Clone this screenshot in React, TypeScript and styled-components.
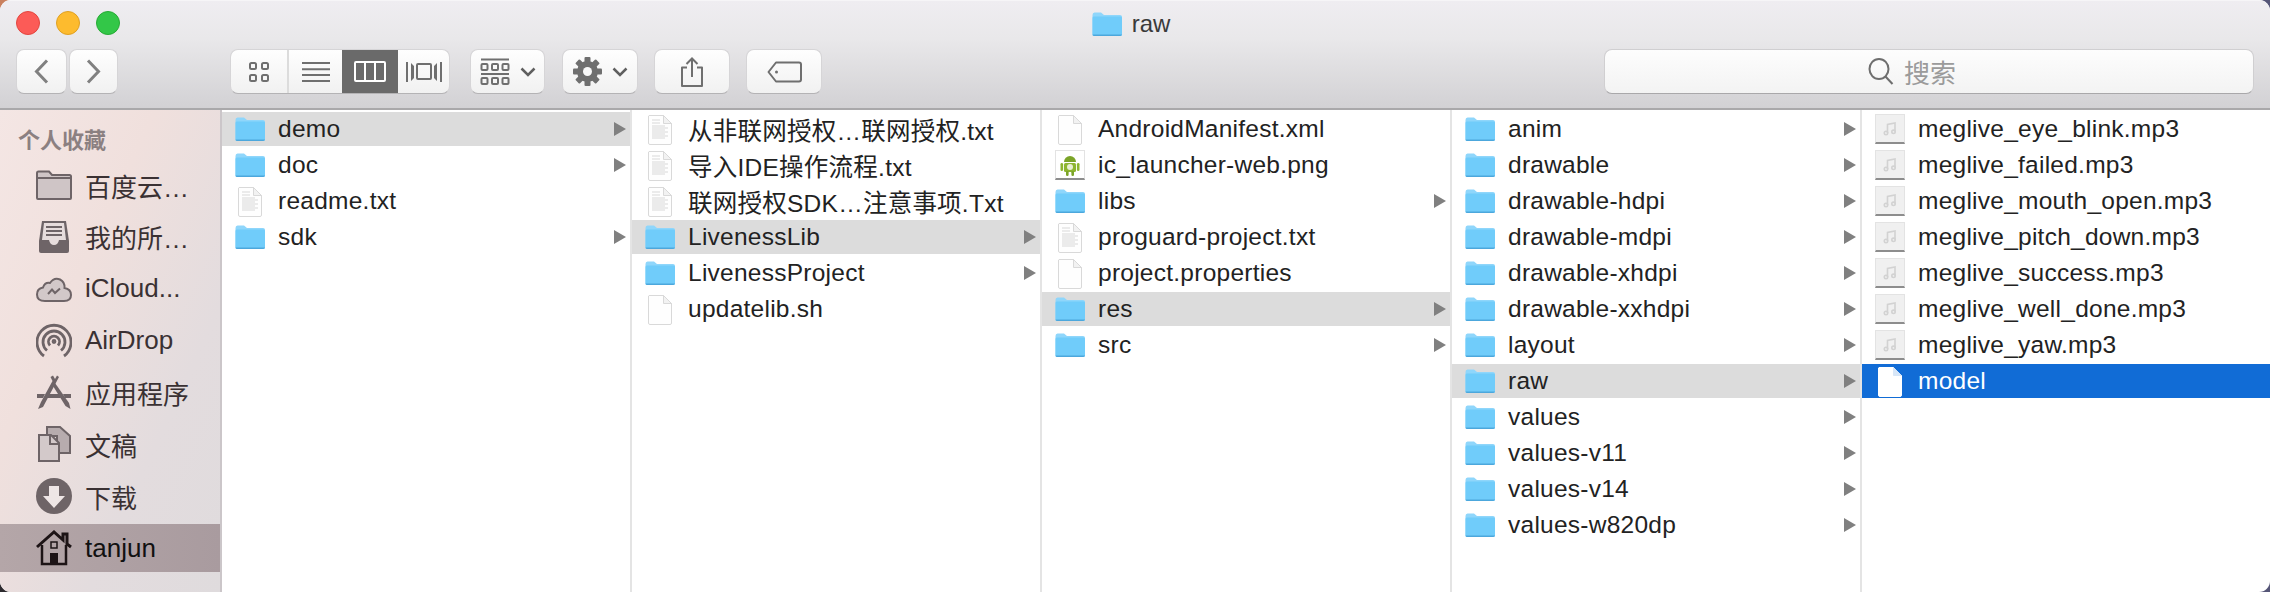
import React from 'react';
import styled, { createGlobalStyle } from 'styled-components';

const GlobalStyle = createGlobalStyle`
  html, body {
    margin: 0;
    padding: 0;
    background:
      radial-gradient(circle at 0 0, #c9805e 0, #c9805e 8px, transparent 12px),
      linear-gradient(90deg, #2c2a2e 0%, #555577 100%);
  }
  * { box-sizing: border-box; }
`;

const Window = styled.div`
  width: 2270px;
  height: 592px;
  border-radius: 11px;
  overflow: hidden;
  background: #fff;
  display: flex;
  flex-direction: column;
  font-family: 'Liberation Sans', 'Noto Sans CJK SC', sans-serif;
`;

const Header = styled.header`
  height: 110px;
  flex: none;
  background: linear-gradient(#efedf1 0%, #e9e8ea 35%, #d2d1d4 100%);
  border-top: 1px solid #f6f5f7;
  border-bottom: 2px solid #a9a8aa;
`;

const TitleRow = styled.div`
  height: 48px;
  display: grid;
  grid-template-columns: 1fr auto 1fr;
  align-items: center;
`;

const Lights = styled.div`
  display: flex;
  gap: 16px;
  padding-left: 16px;
  margin-top: -4px;
`;

const Light = styled.span<{ $fill: string; $edge: string }>`
  width: 24px;
  height: 24px;
  border-radius: 50%;
  background: ${(p) => p.$fill};
  border: 1px solid ${(p) => p.$edge};
`;

const Title = styled.div`
  display: flex;
  align-items: center;
  gap: 10px;
  margin: -3px 8px 0 0;
  font-size: 24px;
  color: #3a3a3a;
`;

const Toolbar = styled.div`
  display: flex;
  align-items: flex-start;
  padding: 0 16px;
`;

const ToolButton = styled.div<{ $width: number; $gapLeft?: number }>`
  width: ${(p) => p.$width}px;
  height: 45px;
  margin-left: ${(p) => p.$gapLeft ?? 0}px;
  flex: none;
  display: flex;
  align-items: center;
  justify-content: center;
  gap: 10px;
  border-radius: 8px;
  background: linear-gradient(#fefefe, #f1f1f1);
  border: 1px solid #d6d5d7;
  border-bottom-color: #b4b3b5;
`;

const ViewGroup = styled.div`
  width: 220px;
  height: 45px;
  margin-left: 112px;
  flex: none;
  display: flex;
  border-radius: 8px;
  overflow: hidden;
  background: linear-gradient(#fefefe, #f1f1f1);
  border: 1px solid #d6d5d7;
  border-bottom-color: #b4b3b5;
`;

const ViewCell = styled.div<{ $width: number; $active?: boolean; $rule?: boolean }>`
  width: ${(p) => p.$width}px;
  flex: none;
  display: flex;
  align-items: center;
  justify-content: center;
  background: ${(p) => (p.$active ? '#6a6a6a' : 'transparent')};
  border-right: ${(p) => (p.$rule ? '2px solid #dcdcdc' : 'none')};
`;

const SearchBox = styled.div`
  width: 650px;
  height: 45px;
  margin-left: auto;
  padding-right: 34px;
  display: flex;
  align-items: center;
  justify-content: center;
  gap: 9px;
  border-radius: 8px;
  background: linear-gradient(#fdfdfd, #f3f3f3);
  border: 1px solid #d0cfd1;
  border-bottom-color: #a9a8aa;
  font-size: 26px;
  color: #9b9b9b;
`;

const Body = styled.div`
  flex: 1;
  display: flex;
  min-height: 0;
`;

const Sidebar = styled.nav`
  width: 222px;
  flex: none;
  border-right: 2px solid #cbc6c9;
  background: linear-gradient(115deg, #f4e6e4 0%, #f0e0dd 35%, #e3dcde 70%, #dfdbdd 100%);
`;

const SideHeading = styled.div`
  height: 51px;
  padding: 4px 0 0 18px;
  display: flex;
  align-items: center;
  font-size: 22px;
  font-weight: 700;
  color: #8b8081;
`;

const SideList = styled.div`
  display: flex;
  flex-direction: column;
  gap: 3.86px;
`;

const SideItem = styled.div<{ $current?: boolean }>`
  height: 48px;
  padding-left: 36px;
  display: flex;
  align-items: center;
  gap: 13px;
  font-size: 26px;
  color: ${(p) => (p.$current ? '#111' : '#3a3133')};
  background: ${(p) => (p.$current ? 'linear-gradient(90deg, #b4a6a8, #a99b9f)' : 'transparent')};
`;

const SideIconBox = styled.span`
  width: 36px;
  height: 36px;
  flex: none;
  display: flex;
`;

const Column = styled.section`
  width: 410px;
  flex: none;
  padding-top: 2px;
  border-right: 2px solid #e4e4e4;
  &:last-child {
    width: 408px;
    border-right: none;
  }
`;

const Row = styled.div<{ $tone?: 'trail' | 'focus' }>`
  height: 34px;
  margin-bottom: 2px;
  display: flex;
  align-items: center;
  font-size: 24.5px;
  letter-spacing: 0.25px;
  color: ${(p) => (p.$tone === 'focus' ? '#fff' : '#222')};
  background: ${(p) =>
    p.$tone === 'focus' ? '#116cd6' : p.$tone === 'trail' ? '#dcdcdc' : 'transparent'};
`;

const RowIcon = styled.span`
  width: 56px;
  height: 34px;
  flex: none;
  display: flex;
  align-items: center;
  justify-content: center;
`;

const RowName = styled.span`
  flex: 1;
  white-space: nowrap;
`;

const Chevron = styled.span`
  width: 0;
  height: 0;
  margin-right: 4px;
  border-left: 12px solid #808080;
  border-top: 7px solid transparent;
  border-bottom: 7px solid transparent;
`;

const FolderIcon = ({ size = 30 }: { size?: number }) => (
  <svg width={size} height={size * 0.8} viewBox="0 0 30 24" style={{ flex: 'none' }}>
    <path d="M0.5 3 Q0.5 0.5 2.5 0.5 H9 L12 3 H28 Q30 3 30 5 V22 Q30 24 28 24 H2 Q0.5 24 0.5 22 Z" fill="#8fd6fb" />
    <path d="M0.5 6 Q0.5 4.6 2 4.6 H28.5 Q30 4.6 30 6 V22 Q30 24 28 24 H2 Q0.5 24 0.5 22 Z" fill="#70ccfa" />
    <path d="M0.5 22.4 H30 V22.6 Q30 24 28 24 H2 Q0.5 24 0.5 22.6 Z" fill="#4ca7dc" />
  </svg>
);

const PageIcon = ({ lines, solid }: { lines?: boolean; solid?: boolean }) => (
  <svg width="24" height="31" viewBox="0 0 24 31">
    <path
      d="M1 1.5 H15.5 L23.5 9.5 V29 Q23.5 30.5 22 30.5 H2 Q0.5 30.5 0.5 29 V2 Z"
      fill={solid ? '#fff' : '#fefefe'}
      stroke={solid ? '#fff' : '#d9d9d9'}
    />
    <path d="M15.5 1.5 V9.5 H23.5 Z" fill={solid ? '#d7e6f7' : '#f2f2f2'} stroke={solid ? '#d7e6f7' : '#d9d9d9'} />
    {lines &&
      [6, 9, 12, 14, 16, 18, 20, 22, 24].map((y) => (
        <line key={y} x1="4" x2={y < 10 ? 12 : y % 4 === 0 ? 17 : 20} y1={y} y2={y} stroke="#cfcfcf" strokeWidth="0.8" />
      ))}
  </svg>
);

const ThumbFrame = styled.span<{ $white?: boolean }>`
  width: 30px;
  height: 30px;
  flex: none;
  display: flex;
  align-items: center;
  justify-content: center;
  background: ${(p) => (p.$white ? '#fff' : '#f0f0f0')};
  border: 1px solid #e3e3e3;
  border-bottom: 2px solid #8d8d8d;
`;

const AndroidIcon = () => (
  <ThumbFrame $white>
    <svg width="20" height="22" viewBox="0 0 20 22">
      <path d="M4 8 A6 6 0 0 1 16 8 Z" fill="#7ba428" />
      <rect x="4" y="9" width="12" height="9" rx="1.5" fill="#8db52f" />
      <rect x="0.5" y="9" width="2.6" height="8" rx="1.3" fill="#8db52f" />
      <rect x="16.9" y="9" width="2.6" height="8" rx="1.3" fill="#8db52f" />
      <rect x="6" y="17" width="2.6" height="5" rx="1.2" fill="#7ba428" />
      <rect x="11.4" y="17" width="2.6" height="5" rx="1.2" fill="#7ba428" />
      <circle cx="10" cy="13" r="3" fill="#e8efd4" />
    </svg>
  </ThumbFrame>
);

const AudioIcon = () => (
  <ThumbFrame>
    <svg width="14" height="14" viewBox="0 0 14 14" fill="none" stroke="#d2d2d2" strokeWidth="1.6">
      <path d="M4.5 11 V2.5 L12 1 V9.5" />
      <circle cx="3" cy="11" r="1.7" />
      <circle cx="10.5" cy="9.8" r="1.7" />
    </svg>
  </ThumbFrame>
);

const sideStroke = '#6e6467';

const sideIcons: Record<string, React.ReactNode> = {
  folder: (
    <path d="M1 9 V6 Q1 4.500 2.500 4.500 H13 L16 8 H33.500 Q35 8 35 9.500 V31 Q35 32 34 32 H2 Q1 32 1 31 Z M1 11 H35" fill="#cfc5c6" stroke={sideStroke} strokeWidth="2" />
  ),
  tray: (
    <>
      <path d="M6 2 H30 L33 22 V32 Q33 34 31 34 H5 Q3 34 3 32 V22 Z" fill={sideStroke} />
      <path d="M8 4 H28 L30 21 H23 Q22 26 18 26 Q14 26 13 21 H6 Z" fill="#e6dcdc" />
      <path d="M10 8 H26 M10 12 H26 M10 16 H26" stroke={sideStroke} strokeWidth="2" />
    </>
  ),
  cloud: (
    <>
      <path d="M9 30 Q1 30 1 23.500 Q1 17.500 7 16.500 Q9 11 14 12 Q18 6 24 8.500 Q29 11 28.500 17 Q35 18 35 24 Q35 30 28 30 Z" fill="#d2c8c9" stroke={sideStroke} strokeWidth="2" />
      <path d="M12 23 L16 18.500 L19 22 L24 17.500" fill="none" stroke={sideStroke} strokeWidth="2" />
    </>
  ),
  airdrop: (
    <g fill="none" stroke={sideStroke} strokeWidth="2.800">
      <path d="M8 33 A17 17 0 1 1 28 33" />
      <path d="M11 27.500 A11 11 0 1 1 25 27.500" />
      <path d="M14 22.500 A5.500 5.500 0 1 1 22 22.500" />
      <circle cx="18" cy="18.500" r="1" fill={sideStroke} />
    </g>
  ),
  apps: (
    <g fill={sideStroke}>
      <path d="M1 20 H9 L7 24 H1 Z M27 20 H35 V24 H29 Z M13 20 H23 L25 24 H11 Z" />
      <path d="M5 28 L16.500 7 L14.500 3 L17 1.500 L19 5 L21 1.500 L23 3 L7 33 L2 35 Z" />
      <path d="M19 9 L33 29 L34.500 35 L29.500 32 L17 12 Z" />
    </g>
  ),
  docs: (
    <>
      <path d="M11 1 H24 L34 10 V27 H21 V10 H11 Z" fill="#b7acae" stroke={sideStroke} strokeWidth="2" />
      <path d="M3 9 H15 L23 17 V35 H3 Z" fill="#d3c9ca" stroke={sideStroke} strokeWidth="2" />
      <path d="M14 9 V18 H23" fill="none" stroke={sideStroke} strokeWidth="2" />
    </>
  ),
  download: (
    <>
      <circle cx="18" cy="18" r="18" fill={sideStroke} />
      <path d="M13 8 H23 V18 H29 L18 30 L7 18 H13 Z" fill="#eee6e6" />
    </>
  ),
  home: (
    <>
      <path d="M1 17 L18 2 L27 10 V4 H31 V14 L35 17" fill="none" stroke="#1d1416" strokeWidth="3" />
      <path d="M6 15 V34 H30 V15" fill="none" stroke="#1d1416" strokeWidth="2.500" />
      <rect x="15" y="12" width="6" height="6" fill="none" stroke="#1d1416" strokeWidth="1.500" />
      <rect x="14" y="23" width="8" height="11" fill="#1d1416" />
    </>
  ),
};

const SideIcon = ({ name }: { name: string }) => (
  <SideIconBox>
    <svg width="36" height="36" viewBox="0 0 36 36">
      {sideIcons[name]}
    </svg>
  </SideIconBox>
);

const places = [
  { icon: 'folder', label: '百度云…' },
  { icon: 'tray', label: '我的所…' },
  { icon: 'cloud', label: 'iCloud...' },
  { icon: 'airdrop', label: 'AirDrop' },
  { icon: 'apps', label: '应用程序' },
  { icon: 'docs', label: '文稿' },
  { icon: 'download', label: '下载' },
  { icon: 'home', label: 'tanjun', current: true },
];

type Kind = 'folder' | 'doc' | 'blank' | 'png' | 'audio';
type Entry = { name: string; kind: Kind; tone?: 'trail' | 'focus' };

const folders = (names: string[]): Entry[] => names.map((name) => ({ name, kind: 'folder' as Kind }));

const columns: Entry[][] = [
  [
    { name: 'demo', kind: 'folder', tone: 'trail' },
    { name: 'doc', kind: 'folder' },
    { name: 'readme.txt', kind: 'doc' },
    { name: 'sdk', kind: 'folder' },
  ],
  [
    { name: '从非联网授权…联网授权.txt', kind: 'doc' },
    { name: '导入IDE操作流程.txt', kind: 'doc' },
    { name: '联网授权SDK…注意事项.Txt', kind: 'doc' },
    { name: 'LivenessLib', kind: 'folder', tone: 'trail' },
    { name: 'LivenessProject', kind: 'folder' },
    { name: 'updatelib.sh', kind: 'blank' },
  ],
  [
    { name: 'AndroidManifest.xml', kind: 'blank' },
    { name: 'ic_launcher-web.png', kind: 'png' },
    { name: 'libs', kind: 'folder' },
    { name: 'proguard-project.txt', kind: 'doc' },
    { name: 'project.properties', kind: 'blank' },
    { name: 'res', kind: 'folder', tone: 'trail' },
    { name: 'src', kind: 'folder' },
  ],
  [
    ...folders(['anim', 'drawable', 'drawable-hdpi', 'drawable-mdpi', 'drawable-xhdpi', 'drawable-xxhdpi', 'layout']),
    { name: 'raw', kind: 'folder', tone: 'trail' },
    ...folders(['values', 'values-v11', 'values-v14', 'values-w820dp']),
  ],
  [
    { name: 'meglive_eye_blink.mp3', kind: 'audio' },
    { name: 'meglive_failed.mp3', kind: 'audio' },
    { name: 'meglive_mouth_open.mp3', kind: 'audio' },
    { name: 'meglive_pitch_down.mp3', kind: 'audio' },
    { name: 'meglive_success.mp3', kind: 'audio' },
    { name: 'meglive_well_done.mp3', kind: 'audio' },
    { name: 'meglive_yaw.mp3', kind: 'audio' },
    { name: 'model', kind: 'blank', tone: 'focus' },
  ],
];

const EntryIcon = ({ entry }: { entry: Entry }) => {
  if (entry.kind === 'folder') return <FolderIcon />;
  if (entry.kind === 'png') return <AndroidIcon />;
  if (entry.kind === 'audio') return <AudioIcon />;
  return <PageIcon lines={entry.kind === 'doc'} solid={entry.tone === 'focus'} />;
};

const SmallChevron = () => (
  <svg width="16" height="10" viewBox="0 0 16 10" fill="none" stroke="#5f5f5f" strokeWidth="2.500">
    <path d="M1.500 1.500 L8 8 L14.500 1.500" />
  </svg>
);

const iconGrey = '#6f6f6f';

function App() {
  return (
    <>
      <GlobalStyle />
      <Window>
        <Header>
          <TitleRow>
            <Lights>
              <Light $fill="#fc5b57" $edge="#e2463f" />
              <Light $fill="#fdbb2e" $edge="#dfa023" />
              <Light $fill="#33c748" $edge="#27aa35" />
            </Lights>
            <Title>
              <FolderIcon />
              raw
            </Title>
            <div />
          </TitleRow>
          <Toolbar>
            <ToolButton $width={51}>
              <svg width="15" height="25" viewBox="0 0 15 25" fill="none" stroke="#808080" strokeWidth="3">
                <path d="M13 1.500 L2.500 12.500 L13 23.500" />
              </svg>
            </ToolButton>
            <ToolButton $width={49} $gapLeft={2}>
              <svg width="15" height="25" viewBox="0 0 15 25" fill="none" stroke="#808080" strokeWidth="3">
                <path d="M2 1.500 L12.500 12.500 L2 23.500" />
              </svg>
            </ToolButton>
            <ViewGroup>
              <ViewCell $width={58} $rule>
                <svg width="20" height="20" viewBox="0 0 20 20" fill="none" stroke={iconGrey} strokeWidth="2">
                  <rect x="1" y="1" width="6" height="6" rx="1.500" />
                  <rect x="13" y="1" width="6" height="6" rx="1.500" />
                  <rect x="1" y="13" width="6" height="6" rx="1.500" />
                  <rect x="13" y="13" width="6" height="6" rx="1.500" />
                </svg>
              </ViewCell>
              <ViewCell $width={53}>
                <svg width="28" height="20" viewBox="0 0 28 20" fill="none" stroke={iconGrey} strokeWidth="2">
                  <path d="M0 1 H28 M0 7.300 H28 M0 13 H28 M0 19 H28" />
                </svg>
              </ViewCell>
              <ViewCell $width={56} $active>
                <svg width="32" height="21" viewBox="0 0 32 21" fill="none" stroke="#fff" strokeWidth="2">
                  <rect x="1" y="1" width="30" height="19" rx="1" />
                  <path d="M11 1 V20 M21 1 V20" />
                </svg>
              </ViewCell>
              <ViewCell $width={51}>
                <svg width="36" height="22" viewBox="0 0 36 22" fill="none" stroke={iconGrey} strokeWidth="2">
                  <rect x="11" y="3" width="14" height="15" rx="1" />
                  <path d="M1 1 V21 M35 1 V21" />
                  <path d="M5 2 V20 L8 17 V5 Z M31 2 V20 L28 17 V5 Z" fill={iconGrey} stroke="none" />
                </svg>
              </ViewCell>
            </ViewGroup>
            <ToolButton $width={75} $gapLeft={20}>
              <svg width="30" height="27" viewBox="0 0 30 27" fill="none" stroke={iconGrey} strokeWidth="2">
                <path d="M1 1.500 H29 M1 16 H29" />
                <rect x="1.500" y="6" width="6" height="6" rx="1" />
                <rect x="12" y="6" width="6" height="6" rx="1" />
                <rect x="22.500" y="6" width="6" height="6" rx="1" />
                <rect x="1.500" y="20" width="6" height="6" rx="1" />
                <rect x="12" y="20" width="6" height="6" rx="1" />
                <rect x="22.500" y="20" width="6" height="6" rx="1" />
              </svg>
              <SmallChevron />
            </ToolButton>
            <ToolButton $width={76} $gapLeft={17}>
              <svg width="29" height="29" viewBox="0 0 29 29">
                <g fill={iconGrey}>
                  <circle cx="14.500" cy="14.500" r="10.500" />
                  {[0, 45, 90, 135, 180, 225, 270, 315].map((a) => (
                    <rect key={a} x="11.500" y="0" width="6" height="7" rx="1" transform={`rotate(${a} 14.500 14.500)`} />
                  ))}
                </g>
                <circle cx="14.500" cy="14.500" r="4.500" fill="#f8f8f8" />
              </svg>
              <SmallChevron />
            </ToolButton>
            <ToolButton $width={76} $gapLeft={16}>
              <svg width="24" height="30" viewBox="0 0 24 30" fill="none" stroke={iconGrey} strokeWidth="2">
                <path d="M7 10.500 H2 V29 H22 V10.500 H17" strokeLinejoin="round" />
                <path d="M12 20 V2 M6.500 7 L12 1.500 L17.500 7" />
              </svg>
            </ToolButton>
            <ToolButton $width={76} $gapLeft={16}>
              <svg width="35" height="22" viewBox="0 0 35 22" fill="none" stroke={iconGrey} strokeWidth="2">
                <path d="M9 1.500 H32 Q34 1.500 34 3.500 V18.500 Q34 20.500 32 20.500 H9 L1.500 11 Z" strokeLinejoin="round" />
                <circle cx="9.500" cy="11" r="1.500" fill={iconGrey} stroke="none" />
              </svg>
            </ToolButton>
            <SearchBox>
              <svg width="27" height="27" viewBox="0 0 27 27" fill="none" stroke="#6e6e6e" strokeWidth="2">
                <ellipse cx="11" cy="11" rx="9.500" ry="10" />
                <path d="M17.500 18.500 L24.500 26" />
              </svg>
              搜索
            </SearchBox>
          </Toolbar>
        </Header>
        <Body>
          <Sidebar>
            <SideHeading>个人收藏</SideHeading>
            <SideList>
              {places.map((place) => (
                <SideItem key={place.label} $current={place.current}>
                  <SideIcon name={place.icon} />
                  {place.label}
                </SideItem>
              ))}
            </SideList>
          </Sidebar>
          {columns.map((entries, index) => (
            <Column key={index}>
              {entries.map((entry) => (
                <Row key={entry.name} $tone={entry.tone}>
                  <RowIcon>
                    <EntryIcon entry={entry} />
                  </RowIcon>
                  <RowName>{entry.name}</RowName>
                  {entry.kind === 'folder' && <Chevron />}
                </Row>
              ))}
            </Column>
          ))}
        </Body>
      </Window>
    </>
  );
}

export default App;
